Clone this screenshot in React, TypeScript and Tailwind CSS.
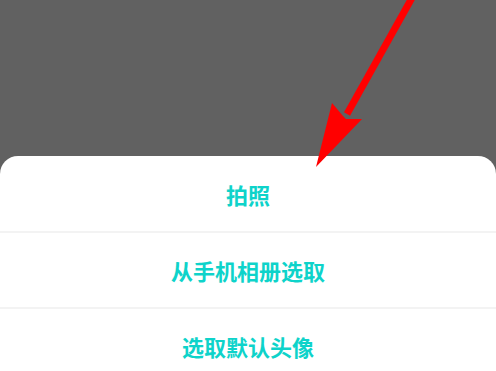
import React from "react";

const items = ["拍照", "从手机相册选取", "选取默认头像"];

export default function App() {
  return (
    <div
      className="relative w-[496px] h-[371px] overflow-hidden bg-[#616161] flex flex-col"
      style={{ fontFamily: '"Noto Sans CJK SC", "Noto Sans", sans-serif' }}
    >
      <div className="h-[156px] shrink-0" />
      <div className="flex-1 bg-white rounded-t-[18px] flex flex-col">
        <div className="h-[75px] flex items-center justify-center text-[22px] font-bold text-[#0ed3ca] pt-[2px]">
          {items[0]}
        </div>
        <div className="h-[2px] bg-[#f3f3f3]" />
        <div className="h-[74px] flex items-center justify-center text-[22px] font-bold text-[#0ed3ca]">
          {items[1]}
        </div>
        <div className="h-[2px] bg-[#f3f3f3]" />
        <div className="h-[74px] flex items-center justify-center text-[22px] font-bold text-[#0ed3ca]">
          {items[2]}
        </div>
      </div>
      <svg
        className="absolute left-0 top-0 pointer-events-none"
        width="496"
        height="371"
        viewBox="0 0 496 371"
      >
        <line x1="413" y1="-4" x2="347" y2="114" stroke="#ff0000" strokeWidth="7" />
        <polygon points="332,103 316,167 362,119 346,119 343,116" fill="#ff0000" />
      </svg>
    </div>
  );
}
